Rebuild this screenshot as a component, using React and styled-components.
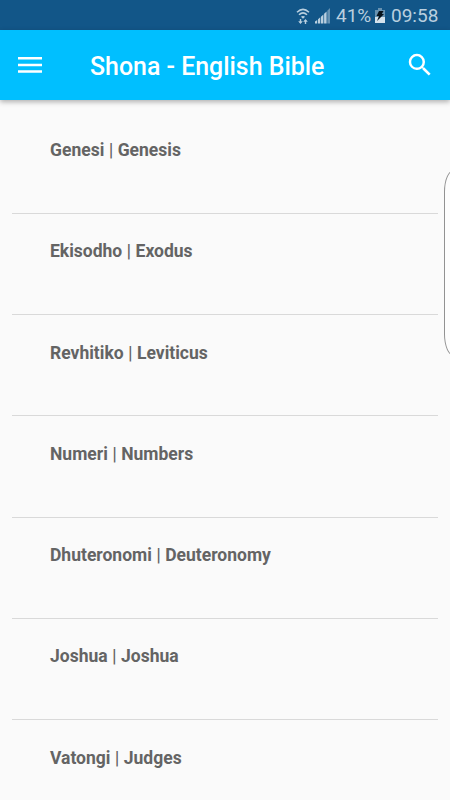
import React from "react";
import styled, { createGlobalStyle } from "styled-components";

const GlobalStyle = createGlobalStyle`
  * { box-sizing: border-box; }
  html, body { margin: 0; padding: 0; background: #fafafa; }
  body { font-family: Roboto, "Noto Sans", sans-serif; overflow: hidden; }
`;

const Screen = styled.main`
  position: relative;
  display: flex;
  flex-direction: column;
  width: 450px;
  height: 800px;
  overflow: hidden;
  background: #fafafa;
`;

const StatusBar = styled.div`
  display: flex;
  flex: none;
  align-items: center;
  justify-content: flex-end;
  height: 30px;
  padding: 2px 12px 0 0;
  background: #125688;
  color: #b9cfdf;
`;

const StatusText = styled.span`
  font-size: 19px;
  line-height: 28px;
  width: ${(p) => p.$width}px;
  white-space: nowrap;
`;

const StatusIcon = styled.svg`
  flex: none;
  display: block;
  margin-right: ${(p) => p.$gap}px;
`;

const AppBar = styled.header`
  display: flex;
  flex: none;
  align-items: center;
  height: 70px;
  padding: 0 15px 0 16px;
  background: #00bfff;
  color: #fff;
  box-shadow: 0 2px 5px rgba(0, 0, 0, 0.3);
  z-index: 1;
`;

const IconButton = styled.button`
  display: flex;
  flex: none;
  padding: 0;
  border: 0;
  background: none;
  color: inherit;
`;

const Title = styled.h1`
  flex: 1;
  margin: 4px 0 0 46px;
  font-size: 24.9px;
  font-weight: 500;
  line-height: 30px;
  white-space: nowrap;
`;

const BookList = styled.ul`
  flex: none;
  margin: 0;
  padding: 12.5px 12px 0;
  list-style: none;
`;

const BookRow = styled.li`
  height: 101.25px;
  padding: 25.7px 38px 0;
  border-bottom: 1px solid #d9d9d9;
  color: #646464;
  font-size: 17.5px;
  font-weight: 700;
  line-height: 24px;
  white-space: nowrap;
`;

const Divider = styled.span`
  font-size: 19px;
  font-weight: 400;
  line-height: 1;
`;

const EdgeHandle = styled.div`
  position: absolute;
  top: 170px;
  left: 444px;
  width: 20px;
  height: 186px;
  border: 1px solid #929292;
  border-radius: 12px / 26px;
  background: #fdfdfd;
  z-index: 2;
`;

const books = [
  ["Genesi", "Genesis"],
  ["Ekisodho", "Exodus"],
  ["Revhitiko", "Leviticus"],
  ["Numeri", "Numbers"],
  ["Dhuteronomi", "Deuteronomy"],
  ["Joshua", "Joshua"],
  ["Vatongi", "Judges"],
];

function WifiIcon() {
  return (
    <StatusIcon width="14" height="17" viewBox="0 0 14 17" $gap={5} fill="none" stroke="currentColor">
      <path d="M1 4.2Q7-1.5 13 4.2" strokeWidth="1.5" />
      <path d="M3 6.8Q7 3 11 6.8" strokeWidth="1.5" />
      <path d="M4.9 8.8Q7 7 9.1 8.8L7 10.7Z" fill="currentColor" stroke="none" />
      <path d="M4.5 11V15M9.5 16V12" strokeWidth="1.4" />
      <path d="M2.2 13.3H6.8L4.5 16ZM7.2 13.7H11.8L9.5 11Z" fill="currentColor" stroke="none" />
    </StatusIcon>
  );
}

function SignalIcon() {
  return (
    <StatusIcon width="15" height="16" viewBox="0 0 15 16" $gap={6} fill="currentColor">
      <path d="M0 13.5L2.2 12V15.5H0ZM3 11.3L5.3 9.3V15.5H3ZM6 8.7L8.4 6.5V15.5H6ZM9.1 5.8L11.6 3.5V15.5H9.1Z" />
      <path d="M12.3 2.7L15 0V15.5H12.3Z" opacity=".5" />
    </StatusIcon>
  );
}

function BatteryIcon() {
  return (
    <StatusIcon width="10" height="16" viewBox="0 0 10 16" $gap={6}>
      <path d="M3 0H7V2H10V9H0V2H3Z" fill="#6792b1" />
      <path d="M0 9H10V15H0Z" fill="#d4e2ec" />
      <path d="M4 3H8.5L6.8 6H9L2 13L4 8H1.5Z" fill="#07131c" />
    </StatusIcon>
  );
}

function MenuIcon() {
  return (
    <svg width="28" height="20" viewBox="0 0 28 20" fill="currentColor">
      <path d="M2 2H26V4.5H2ZM2 8.7H26V11.2H2ZM2 15.3H26V17.8H2Z" />
    </svg>
  );
}

function SearchIcon() {
  return (
    <svg width="30" height="30" viewBox="0 0 24 24" fill="currentColor">
      <path d="M15.5 14h-.79l-.28-.27A6.471 6.471 0 0 0 16 9.5 6.5 6.5 0 1 0 9.5 16c1.61 0 3.09-.59 4.23-1.57l.27.28v.79l5 4.99L20.49 19l-4.99-5zm-6 0C7.01 14 5 11.99 5 9.5S7.01 5 9.5 5 14 7.01 14 9.5 11.99 14 9.5 14z" />
    </svg>
  );
}

export default function App() {
  return (
    <>
      <GlobalStyle />
      <Screen>
        <StatusBar>
          <WifiIcon />
          <SignalIcon />
          <StatusText $width={39}>41%</StatusText>
          <BatteryIcon />
          <StatusText $width={47}>09:58</StatusText>
        </StatusBar>
        <AppBar>
          <IconButton aria-label="Open menu"><MenuIcon /></IconButton>
          <Title>Shona - English Bible</Title>
          <IconButton aria-label="Search"><SearchIcon /></IconButton>
        </AppBar>
        <BookList>
          {books.map(([shona, english]) => (
            <BookRow key={english}>
              {shona} <Divider>|</Divider> {english}
            </BookRow>
          ))}
        </BookList>
        <EdgeHandle />
      </Screen>
    </>
  );
}
